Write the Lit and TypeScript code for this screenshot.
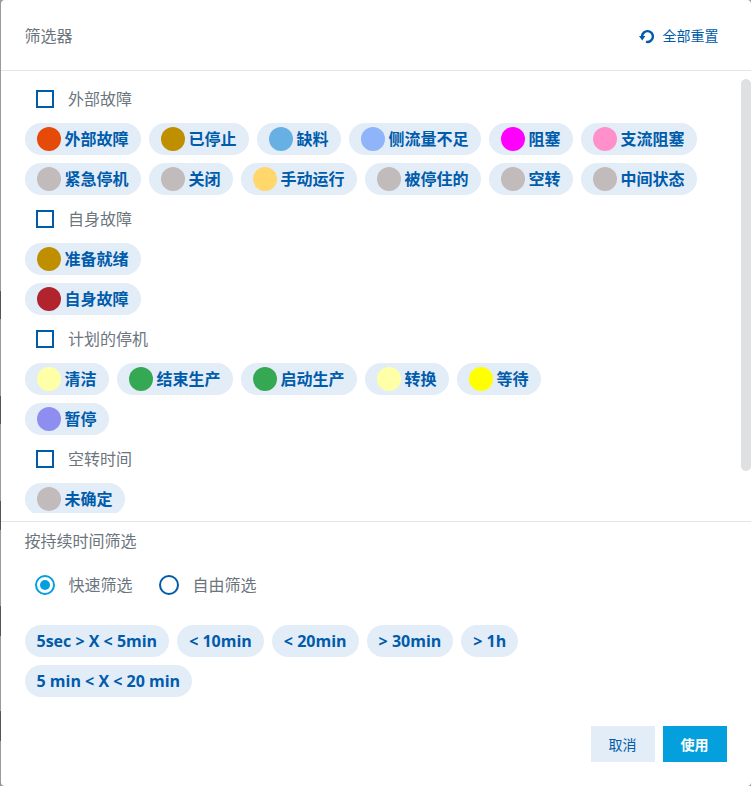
import { LitElement, html, css } from "lit";
import { customElement } from "lit/decorators.js";

const G = "#c1bbbb";
type Chip = [string, string];
const groups: { title: string; rows: Chip[][] }[] = [
  {
    title: "外部故障",
    rows: [
      [["外部故障", "#e64a08"], ["已停止", "#bf8f00"], ["缺料", "#67b0e4"], ["侧流量不足", "#8fb4fa"], ["阻塞", "#ff00ff"], ["支流阻塞", "#ff90cc"]],
      [["紧急停机", G], ["关闭", G], ["手动运行", "#ffd76b"], ["被停住的", G], ["空转", G], ["中间状态", G]],
    ],
  },
  { title: "自身故障", rows: [[["准备就绪", "#bf8f00"]], [["自身故障", "#b1242e"]]] },
  {
    title: "计划的停机",
    rows: [
      [["清洁", "#ffffa8"], ["结束生产", "#34a853"], ["启动生产", "#34a853"], ["转换", "#ffffa8"], ["等待", "#ffff00"]],
      [["暂停", "#8e8ef0"]],
    ],
  },
  { title: "空转时间", rows: [[["未确定", G]]] },
];
const durations = [["5sec > X < 5min", "< 10min", "< 20min", "> 30min", "> 1h"], ["5 min < X < 20 min"]];

@customElement("app-root")
export class AppRoot extends LitElement {
  static styles = css`
    :host {
      display: block;
      width: 751px;
      height: 786px;
      overflow: hidden;
      font-family: "Open Sans", "Noto Sans CJK SC", sans-serif;
      font-size: 16px;
      line-height: 1.5;
      color: #6c757d;
      background: linear-gradient(to bottom,
        #9a9a9a 291px, #555 291px 319px,
        #9a9a9a 319px 396px, #555 396px 424px,
        #9a9a9a 424px 501px, #555 501px 530px,
        #9a9a9a 530px 606px, #555 606px 636px,
        #9a9a9a 636px 711px, #555 711px 741px,
        #9a9a9a 741px);
    }
    .dialog {
      margin-left: 0.5px;
      width: 750px;
      height: 786px;
      box-sizing: border-box;
      background: #fff;
      border-radius: 4px;
      display: flex;
      flex-direction: column;
    }
    .header {
      flex: none;
      box-sizing: border-box;
      border-bottom: 1px solid #e3e5e7;
      height: 71px;
      display: flex;
      align-items: center;
      justify-content: space-between;
      padding: 1px 32px 0 24px;
    }
    .reset {
      display: flex;
      align-items: center;
      gap: 8px;
      font-size: 14px;
      color: #005cab;
    }
    .reset svg { display: block; }
    .scroll {
      position: relative;
      height: 442px;
      flex: none;
      overflow: hidden;
      box-sizing: border-box;
      padding: 12px 24px 0;
      display: flex;
      flex-direction: column;
      gap: 8px;
    }
    .thumb {
      position: absolute;
      top: 8px;
      right: 0;
      width: 10px;
      height: 392px;
      border-radius: 5px;
      background: #dfe0e2;
    }
    .group-head {
      height: 32px;
      flex: none;
      display: flex;
      align-items: center;
      gap: 14.5px;
      padding-left: 11px;
    }
    .box {
      width: 18px;
      height: 18px;
      box-sizing: border-box;
      border: 2px solid #005cab;
      background: #fff;
    }
    .row { display: flex; gap: 8px; flex: none; }
    .chip {
      height: 32px;
      box-sizing: border-box;
      border-radius: 16px;
      background: #e3edf8;
      color: #005cab;
      font-weight: 700;
      padding: 0 12px;
      display: flex;
      align-items: center;
      gap: 4px;
      white-space: nowrap;
    }
    .dot { width: 24px; height: 24px; border-radius: 50%; flex: none; }
    .bottom {
      flex: 1;
      margin-top: 8px;
      border-top: 1px solid #e3e5e7;
      padding: 0 24px;
      display: flex;
      flex-direction: column;
    }
    .title { height: 38px; display: flex; align-items: center; }
    .radios {
      height: 50px;
      display: flex;
      align-items: center;
      padding-left: 10px;
      margin-bottom: 15px;
    }
    .radio-item { display: flex; align-items: center; gap: 14px; margin-right: 26px; }
    .radio {
      width: 20px;
      height: 20px;
      box-sizing: border-box;
      border-radius: 50%;
      border: 2px solid #005cab;
      display: flex;
      align-items: center;
      justify-content: center;
    }
    .radio.on { border-color: #049fdd; }
    .radio.on::after {
      content: "";
      width: 10px;
      height: 10px;
      border-radius: 50%;
      background: #049fdd;
    }
    .chips { display: flex; flex-direction: column; gap: 8px; }
    .actions {
      display: flex;
      justify-content: flex-end;
      gap: 8px;
      margin-top: 29px;
    }
    .btn {
      width: 64px;
      height: 36px;
      display: flex;
      align-items: center;
      justify-content: center;
      font-size: 14px;
    }
    .cancel { background: #e3edf8; color: #005cab; }
    .apply { background: #049fdd; color: #fff; font-weight: 700; }
  `;

  private chip(c: Chip) {
    return html`<div class="chip"><span class="dot" style="background:${c[1]}"></span>${c[0]}</div>`;
  }

  render() {
    return html`
      <div class="dialog">
        <div class="header">
          <span>筛选器</span>
          <div class="reset">
            <svg width="16" height="16" viewBox="0 0 16 16" fill="none">
              <path d="M3.1 8.5A5.4 5.4 0 1 1 7 13.7" stroke="#005cab" stroke-width="2.4" />
              <path d="M0 8H6.4L3.2 12.4Z" fill="#005cab" />
            </svg>
            <span>全部重置</span>
          </div>
        </div>
        <div class="scroll">
          ${groups.map(
            (g) => html`
              <div class="group-head"><span class="box"></span><span>${g.title}</span></div>
              ${g.rows.map((r) => html`<div class="row">${r.map((c) => this.chip(c))}</div>`)}
            `
          )}
          <div class="thumb"></div>
        </div>
        <div class="bottom">
          <div class="title">按持续时间筛选</div>
          <div class="radios">
            <div class="radio-item"><span class="radio on"></span><span>快速筛选</span></div>
            <div class="radio-item"><span class="radio"></span><span>自由筛选</span></div>
          </div>
          <div class="chips">
            ${durations.map((r) => html`<div class="row">${r.map((t) => html`<div class="chip">${t}</div>`)}</div>`)}
          </div>
          <div class="actions">
            <div class="btn cancel">取消</div>
            <div class="btn apply">使用</div>
          </div>
        </div>
      </div>
    `;
  }
}
